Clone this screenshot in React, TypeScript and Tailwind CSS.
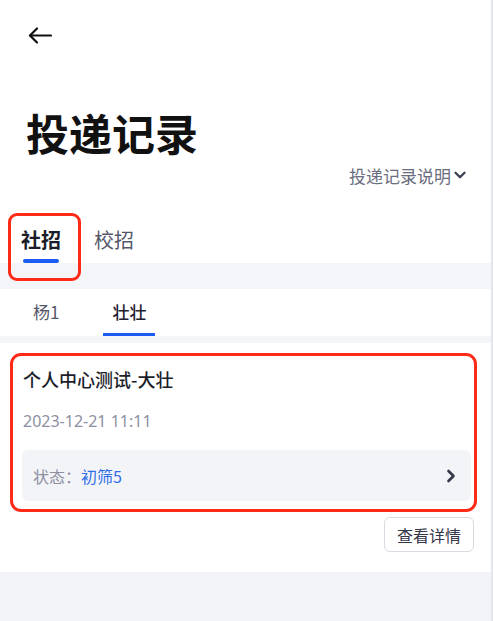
import { ChevronRight, ChevronDown } from 'lucide-react';

const font = { fontFamily: '"Noto Sans CJK SC", "Noto Sans", sans-serif' };

const App = () => {
  return (
    <div className="relative min-h-screen w-full bg-white border-r-2 border-[#e4e5ea] leading-none" style={font}>
      {/* header */}
      <div className="pt-[27px] pl-[28px] h-[70px]">
        <svg width="24" height="17" viewBox="0 0 24 17" fill="none" stroke="#111" strokeWidth="2.2" strokeLinecap="round" strokeLinejoin="round">
          <path d="M23 8.5H2" />
          <path d="M9 1.5L2 8.5L9 15.5" />
        </svg>
      </div>

      <h1 className="mt-[41px] pl-[26px] text-[43px] font-bold text-[#111111] leading-none">投递记录</h1>

      <div className="mt-[12px] flex justify-end items-center pr-[22px] text-[17px] text-[#6a6d7e]">
        <span>投递记录说明</span>
        <ChevronDown size={18} strokeWidth={3.2} className="text-[#3f4253]" />
      </div>

      {/* main tabs */}
      <div className="mt-[46px] flex gap-[33px] pl-[21px] text-[20px]">
        <div className="flex flex-col items-center">
          <span className="font-bold text-[#1b1d29]">社招</span>
          <span className="mt-[9px] h-[4px] w-[36px] rounded-full bg-[#1c5cf2]" />
        </div>
        <span className="text-[#55586a]">校招</span>
      </div>
      <div className="h-[26px] bg-[#f4f5f9]" />

      {/* sub tabs */}
      <div className="pt-[14px] flex pl-[33px] gap-[44px] text-[17px]">
        <span className="text-[#555869]">杨1</span>
        <div className="flex flex-col items-center">
          <span className="font-medium text-[#1e2030]">壮壮</span>
          <span className="mt-[13px] h-[3px] w-[52px] bg-[#1c5cf2]" />
        </div>
      </div>
      <div className="h-[7px] bg-[#f4f5f9]" />

      {/* card */}
      <div className="pl-[23px] pr-[20px]">
        <div className="mt-[27px] text-[18px] text-[#1c1e2b] font-medium">个人中心测试-大壮</div>
        <div className="mt-[25px] text-[16px] text-[#8d90a2]" style={{ fontFamily: '"Noto Sans", "Noto Sans CJK SC", sans-serif' }}>2023-12-21 11:11</div>
        <div className="mt-[21px] -ml-[1px] h-[51px] rounded-[6px] bg-[#f3f4f8] flex items-center justify-between pl-[11px] pr-[10px] text-[16px]">
          <div>
            <span className="text-[#8d90a2]">状态：</span>
            <span className="text-[#2f6ee6]">初筛5</span>
          </div>
          <ChevronRight size={20} strokeWidth={3.2} className="text-[#363949]" />
        </div>
      </div>

      <div className="mt-[16px] flex justify-end pr-[17px]">
        <button className="h-[35px] w-[90px] rounded-[6px] border border-[#d9dbe2] text-[16px] text-[#333648] bg-white">查看详情</button>
      </div>

      <div className="mt-[20px] h-[49px] bg-[#f3f4f9]" />

      {/* annotation boxes */}
      <div className="absolute left-[8px] top-[213px] w-[73px] h-[68px] rounded-[9px] border-[3px] border-[#ff2b17]" />
      <div className="absolute left-[10px] top-[353px] w-[467px] h-[159px] rounded-[11px] border-[3px] border-[#ff2b17]" />
    </div>
  );
};

export default App;
